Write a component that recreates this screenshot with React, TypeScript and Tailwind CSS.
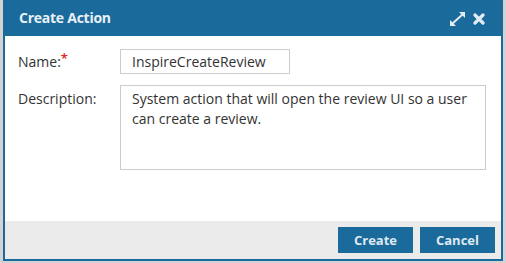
import React from "react";

export default function App() {
  const font = { fontFamily: '"Open Sans", "Noto Sans", sans-serif' };
  return (
    <div
      className="w-[506px] h-[263px] bg-[#d3d3d3] pl-[3px] pr-[3px] pb-[2px] flex"
      style={font}
    >
      <div className="flex-1 flex flex-col border-2 border-t-0 border-[#1b6a9c] bg-white">
        {/* Header */}
        <div className="h-[36px] bg-[#1b6a9c] flex items-center pl-[14px] pr-[16px] shrink-0">
          <div className="text-[14px] font-bold tracking-[-0.25px] text-[#e9f0f6] leading-none pb-[1px]">Create Action</div>
          <div className="ml-auto flex items-center gap-[8px] pt-[2px]">
            <svg width="15" height="14" viewBox="0 0 15 14">
              <g fill="#e3ecf4">
                <path d="M15 0 L15 6 L9 0 Z" />
                <path d="M0 14 L0 8 L6 14 Z" />
              </g>
              <path d="M2.5 11.5 L12.5 2.5" stroke="#e3ecf4" strokeWidth="2" />
            </svg>
            <svg width="12" height="12" viewBox="0 0 12 12">
              <path d="M2 2 L10 10 M10 2 L2 10" stroke="#e3ecf4" strokeWidth="3.2" strokeLinecap="round" />
            </svg>
          </div>
        </div>
        {/* Body */}
        <div className="flex-1 pt-[13px] pl-[13px] text-[14px] text-[#333333]">
          <div className="grid grid-cols-[102px_1fr] gap-y-[11px] items-start">
            <div className="h-[25px] flex items-center">
              <span>Name:</span>
              <span className="text-[#e0201b] self-start text-[13px] font-semibold leading-none mt-[3px]">*</span>
            </div>
            <div className="w-[170px] h-[25px] border border-[#cccccc] flex items-center pl-[11px] leading-none">
              InspireCreateReview
            </div>
            <div className="leading-[20px] pt-[4px]">Description:</div>
            <div className="w-[366px] h-[85px] border border-[#cccccc] pl-[11px] pt-[3px] pr-[6px] leading-[20px]">
              System action that will open the review UI so a user can create a review.
            </div>
          </div>
        </div>
        {/* Footer */}
        <div className="h-[38px] bg-[#ebebeb] flex items-center justify-end gap-[7px] pr-[6px] shrink-0">
          <button className="w-[75px] h-[26px] bg-[#1b6a9c] text-[#dfe9f2] text-[13px] font-bold leading-none">
            Create
          </button>
          <button className="w-[75px] h-[26px] bg-[#1b6a9c] text-[#dfe9f2] text-[13px] font-bold leading-none">
            Cancel
          </button>
        </div>
      </div>
    </div>
  );
}
